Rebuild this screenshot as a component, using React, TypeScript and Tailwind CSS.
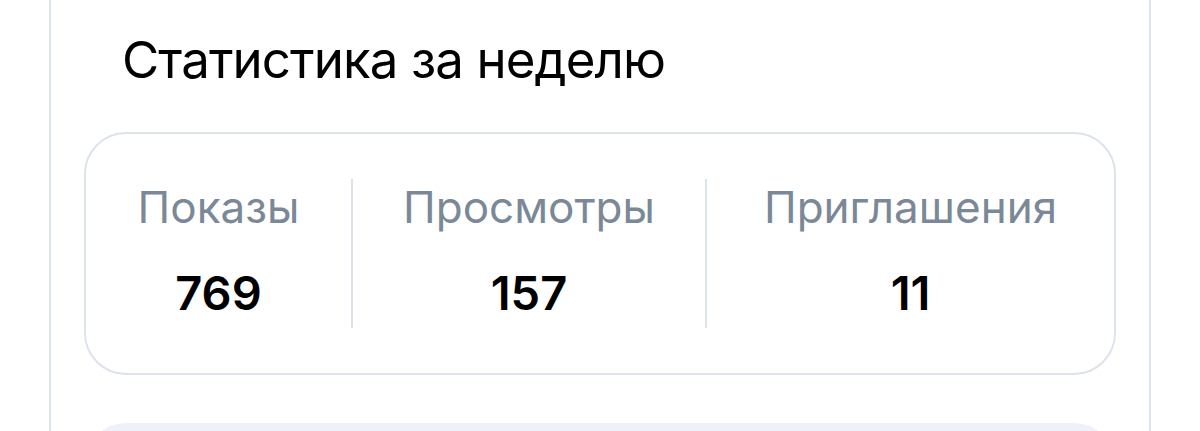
import React from 'react';

const stats = [
  { label: 'Показы', value: '769' },
  { label: 'Просмотры', value: '157' },
  { label: 'Приглашения', value: '11' },
];

export default function App() {
  return (
    <div
      className="w-[1200px] h-[431px] overflow-hidden bg-white"
      style={{ fontFamily: 'Inter, "Noto Sans", sans-serif' }}
    >
      <div className="mx-[49px] h-full border-x-2 border-[#dce3ec] px-[33px] pt-[28px]">
        <h2 className="pl-[38px] text-[51px] leading-[64px] text-black tracking-[-0.9px]">
          Статистика за неделю
        </h2>

        <div className="mt-[40px] h-[243px] rounded-[42px] border-2 border-[#dce3ec] grid grid-cols-[265px_2px_352px_2px_1fr] items-center">
          {stats.map((s, i) => (
            <React.Fragment key={s.label}>
              {i > 0 && <div className="w-[2px] h-[149px] bg-[#dce3ec]" />}
              <div className="flex flex-col items-center pb-[8px]">
                <span className="text-[44px] leading-[52px] text-[#7b8897]">{s.label}</span>
                <span className="mt-[34px] text-[47px] leading-[52px] font-semibold text-black">
                  {s.value}
                </span>
              </div>
            </React.Fragment>
          ))}
        </div>

        <div className="mt-[48px] h-[200px] rounded-[42px] bg-[#eef2f8]" />
      </div>
    </div>
  );
}
